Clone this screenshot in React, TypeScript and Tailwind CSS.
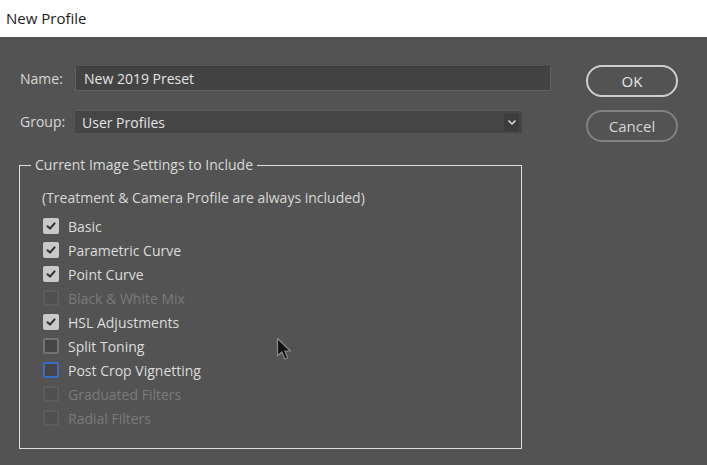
import React from 'react';

type Item = { label: string; state: 'checked' | 'unchecked' | 'disabled' | 'focused' };

const items: Item[] = [
  { label: 'Basic', state: 'checked' },
  { label: 'Parametric Curve', state: 'checked' },
  { label: 'Point Curve', state: 'checked' },
  { label: 'Black & White Mix', state: 'disabled' },
  { label: 'HSL Adjustments', state: 'checked' },
  { label: 'Split Toning', state: 'unchecked' },
  { label: 'Post Crop Vignetting', state: 'focused' },
  { label: 'Graduated Filters', state: 'disabled' },
  { label: 'Radial Filters', state: 'disabled' },
];

function Box({ state }: { state: Item['state'] }) {
  if (state === 'checked') {
    return (
      <div className="w-[16px] h-[16px] rounded-[2px] bg-[#c9c9c9] flex items-center justify-center">
        <svg width="12" height="12" viewBox="0 0 12 12" fill="none" stroke="#2e2e2e" strokeWidth="2" strokeLinecap="round" strokeLinejoin="round">
          <path d="M2.5 6.2 5 8.6 9.6 3.4" />
        </svg>
      </div>
    );
  }
  const border =
    state === 'focused'
      ? 'border-2 border-[#3b6cc4]'
      : state === 'disabled'
        ? 'border-2 border-[#5c5c5c]'
        : 'border-2 border-[#727272]';
  const bg = state === 'disabled' ? 'bg-[#505050]' : 'bg-[#454545]';
  return <div className={`w-[16px] h-[16px] rounded-[2px] ${border} ${bg}`}></div>;
}

export default function App() {
  return (
    <div
      className="relative w-[707px] h-[465px] overflow-hidden bg-[#535353] text-[14px] text-[#d8d8d8]"
      style={{ fontFamily: '"Open Sans", "Noto Sans", Arial, sans-serif' }}
    >
      {/* Title bar */}
      <div className="h-[37px] bg-white flex items-center pl-[6px] text-[15px] text-[#1b1b1b]">
        New Profile
      </div>

      <div className="flex pt-[29px]">
        {/* Left column */}
        <div className="pl-[20px] w-[551px]">
          <div className="flex items-center h-[25px]">
            <span className="w-[55px]">Name:</span>
            <div className="flex-1 h-[25px] bg-[#434343] border border-[#606060] border-t-[#3c3c3c] flex items-center pl-[8px] text-[#e4e4e4]">
              New 2019 Preset
            </div>
          </div>
          <div className="flex items-center h-[23px] mt-[19px] w-[502px]">
            <span className="w-[55px]">Group:</span>
            <div className="flex-1 h-[23px] bg-[#454545] border-t border-[#5c5c5c] flex items-center pl-[7px] pr-[3px] text-[#e4e4e4]">
              <span className="flex-1">User Profiles</span>
              <div className="w-[15px] h-[17px] bg-[#3c3c3c] flex items-center justify-center">
                <svg width="10" height="7" viewBox="0 0 10 7" fill="none" stroke="#e6e6e6" strokeWidth="1.4">
                  <path d="M1.5 1.5 5 5 8.5 1.5" />
                </svg>
              </div>
            </div>
          </div>

          <fieldset className="mt-[22px] w-[503px] h-[294px] -ml-[1px] border border-[#dedede] pl-[11px] pr-0 pb-0">
            <legend className="px-[4px] text-[#dadada] leading-[20px]">Current Image Settings to Include</legend>
            <div className="pt-[13px] pl-[11px] leading-[20px]">(Treatment &amp; Camera Profile are always included)</div>
            <div className="pt-[6px] pl-[12px] flex flex-col">
              {items.map((it) => (
                <div key={it.label} className="h-[24px] flex items-center gap-[9px]">
                  <Box state={it.state} />
                  <span className={it.state === 'disabled' ? 'text-[#7a7a7a]' : 'text-[#dcdcdc]'}>{it.label}</span>
                </div>
              ))}
            </div>
          </fieldset>
        </div>

        {/* Buttons */}
        <div className="ml-[35px] flex flex-col gap-[13px] -mt-[1px]">
          <button className="w-[92px] h-[32px] rounded-full border-2 border-[#cfcfcf] text-[15px] text-[#e8e8e8] flex items-center justify-center">
            OK
          </button>
          <button className="w-[92px] h-[32px] rounded-full border-2 border-[#828282] text-[15px] text-[#d6d6d6] flex items-center justify-center">
            Cancel
          </button>
        </div>
      </div>

      {/* Mouse cursor */}
      <svg className="absolute left-[276px] top-[337px]" width="16" height="24" viewBox="0 0 16 24">
        <path d="M1.5 1.5 L1.5 19 L5.8 15 L9 22 L11.8 20.8 L8.8 14 L14.5 14 Z" fill="#111" stroke="#8a8a8a" strokeWidth="1.2" strokeLinejoin="round" />
      </svg>
    </div>
  );
}
